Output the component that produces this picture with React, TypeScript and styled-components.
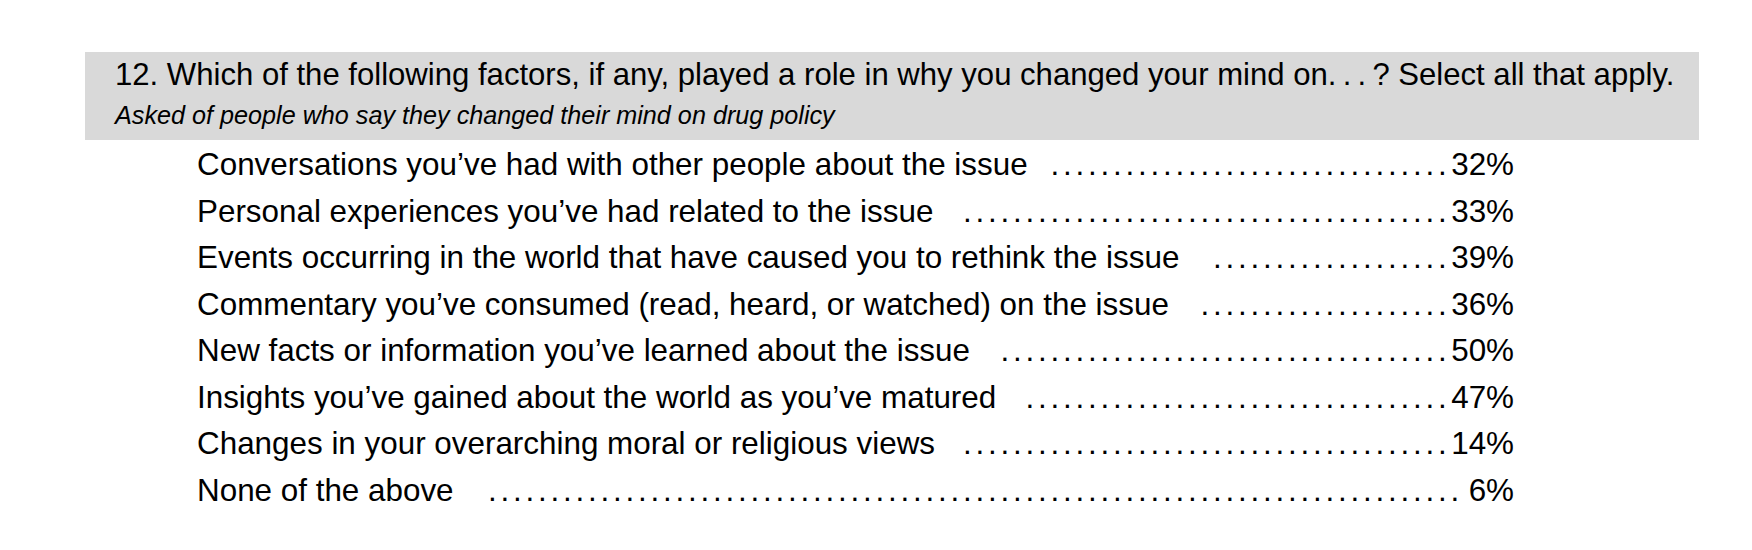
import React, { useLayoutEffect, useRef, useState } from "react";
import styled, { createGlobalStyle } from "styled-components";

const GlobalStyle = createGlobalStyle`
  html, body {
    margin: 0;
    padding: 0;
    background: #ffffff;
  }
  body {
    font-family: "Liberation Sans", Arial, Helvetica, sans-serif;
    color: #000000;
  }
`;

const Page = styled.div`
  padding: 52px 0 0 85px;
  width: 1752px;
  height: 550px;
  box-sizing: border-box;
`;

const Header = styled.header`
  width: 1614px;
  height: 88px;
  box-sizing: border-box;
  background: #d9d9d9;
  padding: 5.2px 0 0 30px;
`;

const Title = styled.h2`
  margin: 0;
  font-size: 31.1px;
  line-height: 36px;
  font-weight: 400;
  white-space: nowrap;
`;

const Subtitle = styled.p`
  margin: 6.6px 0 0 0;
  font-size: 25.2px;
  line-height: 30px;
  font-style: italic;
  white-space: nowrap;
`;

const List = styled.ul`
  list-style: none;
  margin: 2px 0 0 112px;
  padding: 0;
  width: 1317px;
`;

const Row = styled.li`
  display: flex;
  align-items: baseline;
  height: 46.5px;
  font-size: 31.4px;
  line-height: 46.5px;
  white-space: nowrap;
`;

const Label = styled.span`
  flex: none;
`;

const LeaderBox = styled.span`
  flex: 1 1 0;
  min-width: 0;
  display: flex;
  justify-content: flex-start;
  box-sizing: border-box;
`;

const Dot = styled.span`
  flex: none;
  width: 12.5px;
  text-align: center;
`;

const Value = styled.span`
  flex: none;
`;

/* LaTeX-style aligned leaders: dot boxes sit on one grid shared by every row */
const PITCH = 12.5;
const ORIGIN = 1.6;
const GAP_LEFT = 20.4;
const GAP_RIGHT = 1;

function DotRow({ label, value }: { label: string; value: string }) {
  const rowRef = useRef<HTMLLIElement>(null);
  const labelRef = useRef<HTMLSpanElement>(null);
  const valueRef = useRef<HTMLSpanElement>(null);
  const [lead, setLead] = useState({ pad: 0, count: 0 });

  useLayoutEffect(() => {
    const row = rowRef.current;
    const lab = labelRef.current;
    const val = valueRef.current;
    if (!row || !lab || !val) return;
    const r0 = row.getBoundingClientRect().left;
    const l = lab.getBoundingClientRect().right - r0;
    const v = val.getBoundingClientRect().left - r0;
    const first = Math.ceil((l + GAP_LEFT - ORIGIN) / PITCH - 1e-6);
    const last = Math.floor((v - GAP_RIGHT - ORIGIN) / PITCH + 1e-6) - 1;
    setLead({
      pad: Math.max(0, ORIGIN + first * PITCH - l),
      count: Math.max(0, last - first + 1),
    });
  }, [label, value]);

  return (
    <Row ref={rowRef}>
      <Label ref={labelRef}>{label}</Label>
      <LeaderBox aria-hidden="true" style={{ paddingLeft: lead.pad }}>
        {Array.from({ length: lead.count }, (_, i) => (
          <Dot key={i}>.</Dot>
        ))}
      </LeaderBox>
      <Value ref={valueRef}>{value}</Value>
    </Row>
  );
}

const items: { label: string; value: string }[] = [
  { label: "Conversations you\u2019ve had with other people about the issue", value: "32%" },
  { label: "Personal experiences you\u2019ve had related to the issue", value: "33%" },
  { label: "Events occurring in the world that have caused you to rethink the issue", value: "39%" },
  { label: "Commentary you\u2019ve consumed (read, heard, or watched) on the issue", value: "36%" },
  { label: "New facts or information you\u2019ve learned about the issue", value: "50%" },
  { label: "Insights you\u2019ve gained about the world as you\u2019ve matured", value: "47%" },
  { label: "Changes in your overarching moral or religious views", value: "14%" },
  { label: "None of the above", value: "6%" },
];

export default function App() {
  return (
    <>
      <GlobalStyle />
      <Page>
        <Header>
          <Title>
            12. Which of the following factors, if any, played a role in why you changed your mind on.{"\u2009"}.{"\u2009"}.{"\u2009"}? Select all that apply.
          </Title>
          <Subtitle>Asked of people who say they changed their mind on drug policy</Subtitle>
        </Header>
        <List>
          {items.map((it) => (
            <DotRow key={it.label} label={it.label} value={it.value} />
          ))}
        </List>
      </Page>
    </>
  );
}
